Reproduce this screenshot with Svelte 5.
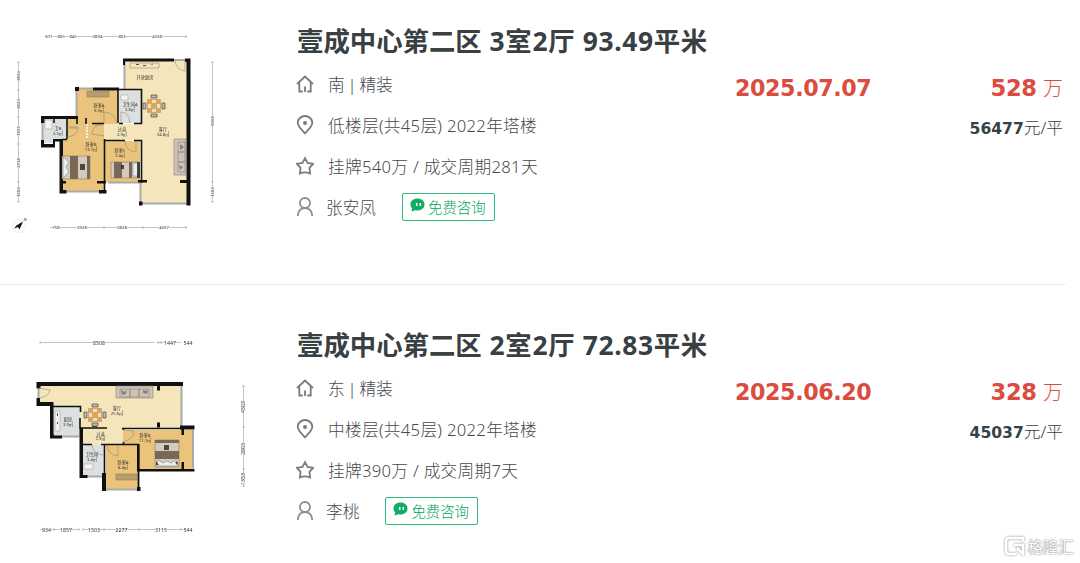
<script lang="ts">
  interface Listing {
    plan: 'three' | 'two';
    name: string;
    spec: string;
    facing: string;
    floor: string;
    deal: string;
    agent: string;
    date: string;
    total: string;
    unit: string;
  }

  const listings: Listing[] = [
    {
      plan: 'three',
      name: '壹成中心第二区',
      spec: '3室2厅 93.49平米',
      facing: '南 | 精装',
      floor: '低楼层(共45层) 2022年塔楼',
      deal: '挂牌540万 / 成交周期281天',
      agent: '张安凤',
      date: '2025.07.07',
      total: '528',
      unit: '56477',
    },
    {
      plan: 'two',
      name: '壹成中心第二区',
      spec: '2室2厅 72.83平米',
      facing: '东 | 精装',
      floor: '中楼层(共45层) 2022年塔楼',
      deal: '挂牌390万 / 成交周期7天',
      agent: '李桃',
      date: '2025.06.20',
      total: '328',
      unit: '45037',
    },
  ];
</script>

{#snippet table(x: number, y: number)}
  <g transform="translate({x} {y})">
    <path class="chair" d="M-3-11h6v3h-6zM-3 8h6v3h-6zM-11-3h3v6h-3zM8-3h3v6h-3z" />
    <rect class="table" x="-7" y="-7" width="14" height="14" rx="1" />
    <path class="plate" d="M-2-6h4v3h-4zM-2 3h4v3h-4zM-6-2h3v4h-3zM3-2h3v4h-3z" />
  </g>
{/snippet}

{#snippet planThree()}
  <svg class="plan" viewBox="0 20 260 220" width="260" height="220">
    <path class="tile" d="M125 61H188V204H141V140H104V124H141V90H125z" />
    <path class="wood" d="M77 89H118V124H104V192H62V118H77zM105 141H140V182H105z" />
    <path class="bath" d="M119 90H141V123H119zM43 118H67V139H54V143H43z" />
    <path class="window" d="M124.500 62V89M78 88.500H93M76.500 90V117M42.500 121V141M64 191.500H102M108 182.500H140M140.500 183V203M141 203.500H188M174 60H185" />
    <path class="wall" d="M123 58.500h51v3h-51zM185 58.500h5.500v146.500h-4V62h-1.500zM123 61h2v4h-2zM75 87h4v4h-4zM93 87.500h26v3h-26zM41 116h37v3h-37zM41 117h3.500v6h-3.500zM41 140h3v4h9v-5h10v2.500h-8v6h-14zM59.500 139h3.500v54.500h-3.500zM59.500 190h7v3.500h-7zM99 190h7.500v3.500h-7.500zM139 201.500h3.500v4h-3.500zM186.500 201.500h4v4h-4zM180 180h8v3h-8zM62 181h4v2.500h-4zM97 181h9v2.500h-9zM138 180h9v2.500h-9z" />
    <path class="thin" d="M118 89V123M119 89.500H141.500V123.500H134M119 123.500H123M92 123.500H104M104.500 139V191M104 140.500H125M134 140.500H141.500V183M86 118V124M54 118V123M67 118V139M62 139.500H67M77 118V124" />
    <path class="line" d="M175 61a11 11 0 0 0 10 10v-10M104 123v-11q10 0 13 11M121 123v-11q8 0 9 11M67 128h11q-1 8-11 9M104 124q-12 1-12 10l12 2M125 141q0 10 11 11v-11M130 63h29v5h-29zM69 127h9M94 125h8" />
    <path class="fixture" d="M45 120h7v9h-7zM121 95h7v5h-7z" />
    <path class="dark" d="M136 64h3v1h-3zM143 65h3v1h-3zM150 65l3-1.500v1z" />
    <rect class="dresser" x="87" y="91" width="22" height="6" />
    <!-- beds -->
    <path class="linen" d="M62 156h28v23h-28zM111 162h28v16h-28z" />
    <path class="blanket" d="M70 156h8v23h-8zM87 156h3v23h-3zM114 162h8v16h-8zM129 162h3v16h-3z" />
    <path class="pillow" d="M63 157l6 5-3 5 3 5-6 6zM133 163h5v13h-5z" />
    <path class="dark" d="M80 164h5v6h-5zM121 165h3v4h-3zM137 162h3v16h-3z" />
    <path class="sofa" d="M174 139h12v36h-12zM178 142h7v10h-7zM178 152h7v10h-7zM178 162h7v10h-7z" />
    <path class="speck" d="M180 144l4 3-4 3zM179 165l4 2-3 3z" />
    <path class="rail" d="M87 124V139" />
    {@render table(154, 106)}
    <g class="room">
      <text x="145" y="78.500">开放厨房</text>
      <text x="99" y="107">卧室A</text>
      <text x="99" y="111.500">9.3㎡</text>
      <text x="130" y="106">卫生间A</text>
      <text x="130" y="110.500">3.8㎡</text>
      <text x="58" y="129.500">卫B</text>
      <text x="58" y="134.500">2.5㎡</text>
      <text x="91" y="146">卧室B</text>
      <text x="91" y="150.500">13.7㎡</text>
      <text x="122" y="131">过道</text>
      <text x="122" y="136">2.9㎡</text>
      <text x="120" y="152">卧室C</text>
      <text x="120" y="156.500">7.4㎡</text>
      <text x="163" y="131">客厅</text>
      <text x="163" y="136">34.8㎡</text>
    </g>
    <path class="ruler" d="M44 36.500H187M18.500 62V202M212.500 62V202M50 227.500H187M186 35v3M17 62h3M17 90h3M17 117h3M17 144h3M17 182h3M17 202h3M211 62h3M211 182h3M211 202h3M104 226v3M143 226v3M186 226v3" />
    <g class="dim">
      <text x="49" y="38">671</text>
      <text x="61" y="38">805</text>
      <text x="73" y="38">845</text>
      <text x="97.500" y="38">2894</text>
      <text x="122" y="38">803</text>
      <text x="157" y="38">4338</text>
      <text x="56" y="229">758</text>
      <text x="82" y="229">2928</text>
      <text x="122" y="229">2828</text>
      <text x="164" y="229">4207</text>
      <text transform="translate(20 76) rotate(-90)">2894</text>
      <text transform="translate(20 104) rotate(-90)">2823</text>
      <text transform="translate(20 131) rotate(-90)">1805</text>
      <text transform="translate(20 163) rotate(-90)">2738</text>
      <text transform="translate(20 192) rotate(-90)">1682</text>
      <text transform="translate(214 121) rotate(-90)">8958</text>
      <text transform="translate(214 192) rotate(-90)">1682</text>
      <text x="25" y="221">N</text>
    </g>
    <circle class="compass" cx="19" cy="226" r="6.500" />
    <path class="wall" d="M23 221.500l-3.500 8-1.500-2.500-4 1.500 2.500-3z" />
  </svg>
{/snippet}

{#snippet planTwo()}
  <svg class="plan" viewBox="0 324 260 220" width="260" height="220">
    <path class="tile" d="M39 385H182V428H123V445H82V428H80V406H53V403H39z" />
    <path class="wood" d="M123 430H194V469H138V489H106V445H123z" />
    <path class="bath" d="M53 407H80V437H53zM83 445H105V476H83z" />
    <path class="window" d="M38.500 389V398M181.500 386V426M61 436.500H79M87 476.500H102M106 489.500H137M138.500 471V487M193 430V468" />
    <path class="wall" d="M36.500 382H183v4H40.500v2.500h-4zM36.500 398h3.500v4h13.500v36h-3.500v-32H36.500zM50 434.500h4v1h8v3h-12zM157 386h3v4.500h-3zM157 422.500h3v5h-3zM180 425.500h14.500v4h-14.500zM79.500 428h3.500v50h-3.500zM80 475h7.500v3h-7.500zM102 473h4v18h-4zM103 487h3v4h-3zM137 487h3.500v4h-3.500zM137 444h2.500v25h55v2.500h-57.500zM181.500 428h2.500v7h-2.500zM181.500 462h2.500v7h-2.500z" />
    <path class="thin" d="M53 406.500H80.500V412M80 418V428H107M122 428.500H184M82 444.500H92M101 444.500H138.500V490M104.500 445V490M123.500 428V430M123.500 442V445" />
    <path class="line" d="M39 388l11 2q-1 7-11 8M123 430l11 1q0 8-11 11M92 445q1 10 12 10M107 445q1 10 11 11v-11" />
    <path class="fixture" d="M55 411h5v20h-5zM84 464h9v5h-9z" />
    <path class="dark" d="M57 413h1v3h-1zM57 422h1v2h-1zM92 425h5v2h-5z" />
    <rect class="dresser" x="116" y="474" width="21" height="6" />
    <!-- bed -->
    <path class="linen" d="M155 440h24v27h-24z" />
    <path class="blanket" d="M155 440h24v3h-24zM155 451h24v8h-24z" />
    <path class="pillow" d="M156 466l2-6 5 3 4-2 4 2 5-3 2 6z" />
    <path class="dark" d="M164 445h5v5h-5zM156 461l3 4h-3zM175 462h3l-1 3z" />
    <path class="sofa" d="M116 386h37v12h-37zM120 389h10v8h-10zM130 389h9v8h-9zM139 389h10v8h-10z" />
    <path class="speck" d="M121 389l3 3 3-2-1 4-4 1zM143 390l3 1 2-2-1 5-4-1z" />
    {@render table(95, 415)}
    <g class="room">
      <text x="117" y="410">客厅</text>
      <text x="117" y="414.500">25.6㎡</text>
      <text x="68" y="421">厨房</text>
      <text x="68" y="425.500">3.9㎡</text>
      <text x="100.500" y="435.500">过道</text>
      <text x="100.500" y="440">2.9㎡</text>
      <text x="145" y="437">卧室B</text>
      <text x="145" y="441.500">11.7㎡</text>
      <text x="92" y="456">卫生间</text>
      <text x="92" y="460.500">3.4㎡</text>
      <text x="123" y="464">卧室A</text>
      <text x="123" y="468.500">8.4㎡</text>
    </g>
    <path class="ruler" d="M40 342.500H155M157 342.500H181M243.500 386V487M40 529.500H79M83 529.500H192M40 341v3M158 341v3M161 341v3M242 386h3M242 427h3M242 469h3M242 486h3M54 528v3M79 528v3M83 528v3M104 528v3M139 528v3M181 528v3" />
    <g class="dim large">
      <text x="99" y="344.500">8508</text>
      <text x="170" y="344.500">1447</text>
      <text x="188" y="344.500">544</text>
      <text x="46.500" y="531.500">934</text>
      <text x="66" y="531.500">1857</text>
      <text x="94" y="531.500">1503</text>
      <text x="121.500" y="531.500">2277</text>
      <text x="161" y="531.500">3115</text>
      <text x="188" y="531.500">544</text>
      <text transform="translate(245 407) rotate(-90)">4503</text>
      <text transform="translate(245 449) rotate(-90)">2803</text>
      <text transform="translate(245 479) rotate(-90)">1353</text>
    </g>
  </svg>
{/snippet}

<main>
  {#each listings as item}
    <article class="listing">
      <div class="thumb">
        {#if item.plan === 'three'}
          {@render planThree()}
        {:else}
          {@render planTwo()}
        {/if}
      </div>

      <div class="info">
        <h2>{item.name} <span class="spec">{item.spec}</span></h2>
        <div class="row">
          <svg class="icon" viewBox="0 0 18 20">
            <path d="M1 10L9 2.500l8 7.500M3.300 8.500V17.500h3.400M14.700 8.500V17.500h-3.400M9 12.500v5.500" />
          </svg>
          <span class="facing">{item.facing}</span>
        </div>
        <div class="row">
          <svg class="icon" viewBox="0 0 18 20">
            <path d="M9 18.300C6 15 1.700 11.500 1.700 7.800a7.300 6.800 0 0 1 14.600 0C16.300 11.500 12 15 9 18.300z" />
            <circle class="dot" cx="9" cy="8" r="2" />
          </svg>
          <span>{item.floor}</span>
        </div>
        <div class="row">
          <svg class="icon" viewBox="0 0 18 20">
            <path d="M9 2.200l2.500 4.700 5.700.9-3.800 4.100.7 5.600Q9 15.400 3.900 17.500l.7-5.600L.8 7.800l5.700-.9z" />
          </svg>
          <span>{item.deal}</span>
        </div>
        <div class="row">
          <svg class="icon user" viewBox="0 0 18 20">
            <circle cx="9" cy="6" r="5" />
            <path d="M1.800 19C2 14.500 4.400 11.200 9 11.200S16 14.500 16.200 19" />
          </svg>
          <span class="agent">{item.agent}</span>
          <button>
            <svg class="chat" viewBox="0 0 15 14">
              <path d="M7.500.5C11.600.5 14.500 3 14.500 6.500s-2.900 6-7 6c-.8 0-1.500-.1-2.200-.3L1.500 13.500l.6-3.200C1 9.200.5 8 .5 6.500.5 3 3.400.5 7.500.5z" />
              <path class="eyes" d="M6.700 5v3M10.300 5v3" />
            </svg>
            免费咨询
          </button>
        </div>
      </div>

      <div class="date">{item.date}</div>

      <div class="price">
        <div class="total"><b>{item.total}</b> 万</div>
        <div class="unit"><b>{item.unit}</b>元/平</div>
      </div>
    </article>
  {/each}

  <div class="watermark">
    <svg viewBox="0 0 21 20">
      <path d="M19 5V2H4L2 4v12l2 2h8M10 9h9v9l-6-6" />
    </svg>
    <span>格隆汇</span>
  </div>
</main>

<style>
  :global(body) {
    margin: 0;
    background: #fff;
  }

  main {
    position: relative;
    height: 563px;
    overflow: hidden;
    font-family: 'Noto Sans', 'Noto Sans CJK SC', sans-serif;
    color: #394043;
  }

  .listing {
    display: grid;
    grid-template-columns: 296px 439px 160px 168px;
    box-sizing: border-box;
    width: 1066px;
    height: 285px;
    padding-top: 20px;
    border-bottom: 1px solid #eee;
  }

  .listing + .listing {
    height: 310px;
    padding-top: 39px;
    border-bottom: 0;
  }

  .plan {
    display: block;
    filter: blur(0.35px);
  }

  .tile { fill: #f4e5bb; }
  .wood { fill: #eac47a; }
  .bath { fill: #dce0e1; }
  .wall, .dark { fill: #111; }
  .dark { opacity: 0.7; }
  .speck { fill: #665; opacity: 0.7; }
  .window { fill: none; stroke: #aaa; stroke-width: 2; }
  .thin { fill: none; stroke: #111; stroke-width: 1.6; }
  .line { fill: none; stroke: #968b72; stroke-width: 0.6; }
  .rail { stroke: #eee; stroke-width: 2; stroke-dasharray: 2 1; }
  .fixture { fill: #f7f5eb; stroke: #999; stroke-width: 0.5; }
  .dresser { fill: #b59d6f; stroke: #8b7751; stroke-width: 0.5; }
  .linen { fill: #d5cbbc; stroke: #776b5c; stroke-width: 0.5; }
  .blanket { fill: #7a6856; }
  .pillow { fill: #e9eeee; stroke: #678; stroke-width: 0.5; }
  .sofa { fill: #cfc3b9; stroke: #888078; stroke-width: 0.6; }
  .chair { fill: #bcb9b5; stroke: #4b4845; stroke-width: 0.7; }
  .table { fill: #d9a55c; }
  .plate { fill: #eee0c8; }
  .compass { fill: none; stroke: #ddd; stroke-width: 0.5; }
  .ruler { stroke: #aaa; stroke-width: 0.7; }

  .room,
  .dim {
    font-size: 4.2px;
    text-anchor: middle;
    fill: #333;
  }

  .dim.large {
    font-size: 5.2px;
  }

  .dim text {
    stroke: #fff;
    stroke-width: 1px;
    paint-order: stroke;
  }

  h2 {
    margin: 0;
    height: 43px;
    padding-left: 1px;
    font-size: 26.4px;
    line-height: 42px;
    font-weight: 700;
    white-space: nowrap;
  }

  .spec {
    margin-left: 1px;
    letter-spacing: 0.65px;
  }

  .row {
    display: flex;
    align-items: center;
    height: 41px;
    font-size: 16.7px;
    font-weight: 300;
    letter-spacing: 0.28px;
    color: #464a4d;
    white-space: nowrap;
  }

  .facing {
    letter-spacing: 0;
    word-spacing: -1.5px;
  }

  .agent {
    letter-spacing: 0;
  }

  .icon {
    width: 18px;
    height: 20px;
    margin-right: 14px;
    fill: none;
    stroke: #777c7e;
    stroke-width: 1.8;
  }

  .dot {
    fill: #777c7e;
    stroke: none;
  }

  .user {
    margin-right: 12px;
    stroke: #8a8e90;
  }

  button {
    display: flex;
    align-items: center;
    gap: 3px;
    box-sizing: border-box;
    width: 93px;
    height: 28px;
    margin-left: 26px;
    padding: 0 0 0 7px;
    border: 1px solid #2dbd7e;
    border-radius: 2px;
    background: #fff;
    font: 300 14.4px 'Noto Sans CJK SC', sans-serif;
    color: #00a65a;
    white-space: nowrap;
  }

  .chat {
    flex: none;
    width: 15px;
    height: 14px;
    margin-top: -3px;
    fill: #0fae66;
  }

  .eyes {
    stroke: #fff;
    stroke-width: 1.5;
  }

  .date,
  b {
    font-family: 'DejaVu Sans', sans-serif;
    font-weight: 700;
    letter-spacing: -0.4px;
  }

  .date {
    padding-top: 48px;
    font-size: 22.2px;
    line-height: 40px;
    color: #db4c3f;
  }

  .price {
    padding-top: 48px;
    text-align: right;
  }

  .total {
    font-size: 20px;
    font-weight: 300;
    line-height: 40px;
    color: #db4c3f;
  }

  .total b {
    margin-right: 1px;
    font-size: 22.6px;
    letter-spacing: -0.3px;
  }

  .unit {
    font-size: 16.7px;
    font-weight: 300;
    line-height: 37px;
  }

  .unit b {
    font-size: 15.6px;
    letter-spacing: 0;
  }

  .watermark {
    position: absolute;
    right: 6px;
    bottom: 6px;
    display: flex;
    align-items: center;
    gap: 2px;
    height: 22px;
    font-size: 15.5px;
    color: #fff;
    text-shadow: 0 0 1px #777, 0 0 2px #999;
  }

  .watermark svg {
    width: 21px;
    height: 20px;
    fill: none;
    stroke: #fff;
    stroke-width: 2.5;
    filter: drop-shadow(0 0 1px #888);
  }
</style>
